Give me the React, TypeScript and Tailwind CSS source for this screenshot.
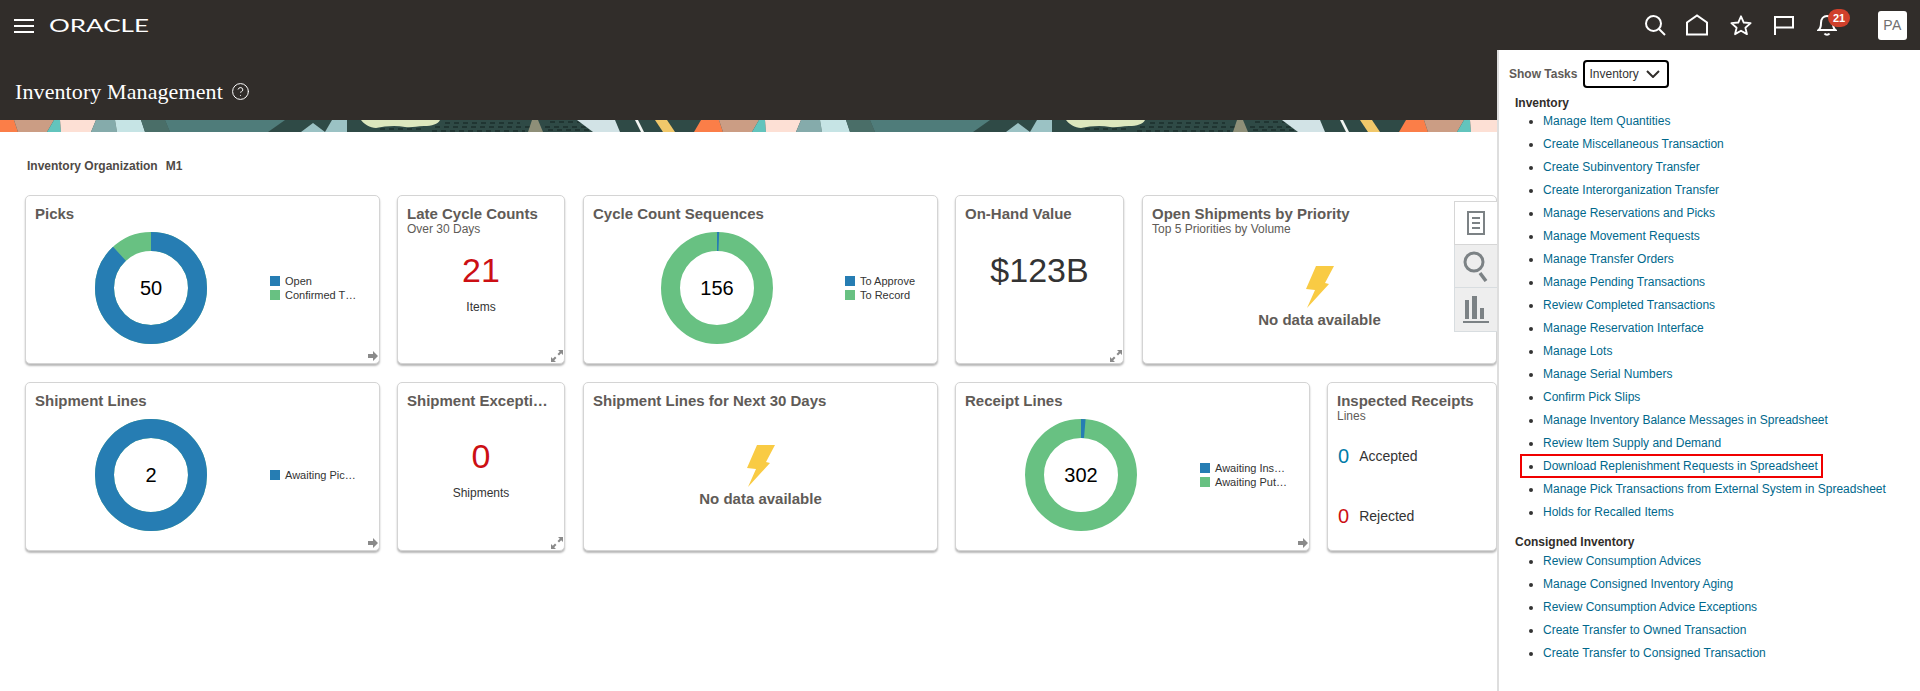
import { ReactNode } from 'react'
import { CircleHelp } from 'lucide-react'

const BLUE = '#267DB3'
const GREEN = '#68C182'

const inventoryTasks = [
  'Manage Item Quantities',
  'Create Miscellaneous Transaction',
  'Create Subinventory Transfer',
  'Create Interorganization Transfer',
  'Manage Reservations and Picks',
  'Manage Movement Requests',
  'Manage Transfer Orders',
  'Manage Pending Transactions',
  'Review Completed Transactions',
  'Manage Reservation Interface',
  'Manage Lots',
  'Manage Serial Numbers',
  'Confirm Pick Slips',
  'Manage Inventory Balance Messages in Spreadsheet',
  'Review Item Supply and Demand',
  'Download Replenishment Requests in Spreadsheet',
  'Manage Pick Transactions from External System in Spreadsheet',
  'Holds for Recalled Items',
]

const consignedTasks = [
  'Review Consumption Advices',
  'Manage Consigned Inventory Aging',
  'Review Consumption Advice Exceptions',
  'Create Transfer to Owned Transaction',
  'Create Transfer to Consigned Transaction',
]

function Banner() {
  return (
    <svg className="block w-full h-[12px]" height="12">
      <defs>
        <pattern id="banner-tile" width="705" height="12" patternUnits="userSpaceOnUse">
          <rect width="705" height="12" fill="#2F4A46" />
          <polygon points="0,0 14,0 18,12 0,12" fill="#FB7E48" />
          <polygon points="14,0 54,0 47,12 18,12" fill="#CB9D84" />
          <polygon points="54,0 60,0 61,12 47,12" fill="#62C4BD" />
          <polygon points="60,0 96,0 91,12 61,12" fill="#FDE0D5" />
          <polygon points="96,0 115,0 117,12 91,12" fill="#85ABAB" />
          <polygon points="115,0 141,0 145,12 117,12" fill="#C6E4E5" />
          <polygon points="141,0 165,0 170,12 145,12" fill="#4A6E68" />
          <polygon points="165,0 285,0 268,12 170,12" fill="#4F7C7A" />
          <polygon points="301,12 313,3 325,12" fill="#9BC2C4" />
          <polygon points="332,0 347,0 347,12 325,12" fill="#9BC2C4" />
          <path d="M361 0 H440 C438 4 432 6 424 6 C416 6 412 8 405 7 C396 5 385 6 376 8 C370 8 364 4 361 0 Z" fill="#DDE7BE" />
          <path
            d="M445 3 H520 M550 2 H590 M380 9 H425 M435 7 H530 M545 7 H600 M432 11 H525 M548 10 H590"
            stroke="#101F1E"
            strokeWidth="1"
            strokeDasharray="5 4"
          />
          <polygon points="532,0 538,0 543,12 528,12" fill="#8E8F78" />
          <polygon points="577,0 615,0 620,12 593,12" fill="#D2E3E6" />
          <polygon points="635,0 638,0 644,12 641,12" fill="#F2F5F2" />
          <polygon points="655,0 667,0 675,12 663,12" fill="#F1C86A" />
          <polygon points="701,0 705,0 705,12 694,12" fill="#FB7E48" />
        </pattern>
      </defs>
      <rect width="100%" height="12" fill="url(#banner-tile)" />
    </svg>
  )
}

function TopIcons() {
  return (
    <div className="flex items-center text-white">
      <svg width="22" height="22" viewBox="0 0 22 22" fill="none" stroke="currentColor" strokeWidth="2" className="mr-[19px]">
        <circle cx="9.5" cy="9.5" r="7.5" />
        <path d="M15 15 L21 21" />
      </svg>
      <svg width="24" height="22" viewBox="0 0 24 22" fill="none" stroke="currentColor" strokeWidth="2" className="mr-[20px]">
        <path d="M2 20.5 V8.5 L12 1.5 L22 8.5 V20.5 Z" />
      </svg>
      <svg width="24" height="22" viewBox="0 0 24 24" fill="none" stroke="currentColor" strokeWidth="2" strokeLinejoin="round" className="mr-[20px]">
        <path d="M12 2.5 L15 9.3 L22.5 10 L16.8 15 L18.5 22 L12 18.3 L5.5 22 L7.2 15 L1.5 10 L9 9.3 Z" />
      </svg>
      <svg width="22" height="20" viewBox="0 0 22 20" fill="none" stroke="currentColor" strokeWidth="2" className="mr-[22px]">
        <path d="M2 20 V2 H20 V12.5 H2" />
      </svg>
      <div className="relative w-[20px] h-[22px] mr-[41px]">
        <svg width="20" height="22" viewBox="0 0 20 22" fill="none" stroke="currentColor" strokeWidth="2">
          <path d="M1.5 16 C3.5 14.5 4 12 4 9 C4 5 6.5 2 10 2 C13.5 2 16 5 16 9 C16 12 16.5 14.5 18.5 16 Z" />
          <path d="M7.5 19.5 C8.5 21 11.5 21 12.5 19.5" />
        </svg>
        <span className="absolute left-[11px] top-[-5px] w-[22px] h-[18px] rounded-full bg-[#D0402B] text-white text-[11px] font-bold leading-[18px] text-center">
          21
        </span>
      </div>
      <div className="w-[29px] h-[29px] rounded-[3px] bg-white text-[#6f6f6f] text-[14px] leading-[29px] text-center tracking-[0.5px] mr-[13px]">
        PA
      </div>
    </div>
  )
}

function Header() {
  return (
    <header className="bg-[#312D2A] h-[120px] text-white">
      <div className="h-[50px] flex items-center justify-between">
        <div className="flex items-center">
          <div className="ml-[14px] mt-[1px] w-[20px] flex flex-col gap-[4px]">
            <div className="h-[2px] bg-white" />
            <div className="h-[2px] bg-white" />
            <div className="h-[2px] bg-white" />
          </div>
          <svg width="100" height="20" viewBox="0 0 100 20" className="ml-[15px] mt-[1px] overflow-visible">
            <text x="0" y="16" fontSize="18" fontWeight="400" fill="#fff" textLength="100" lengthAdjust="spacingAndGlyphs" className="font-['Lato']">
              ORACLE
            </text>
          </svg>
        </div>
        <TopIcons />
      </div>
      <div className="h-[70px] pt-[13px] pl-[15px] flex items-center gap-[8px]">
        <h1 className="font-['Liberation_Serif'] text-[22px] font-normal tracking-[0.1px]">Inventory Management</h1>
        <CircleHelp size={19} strokeWidth={1.25} />
      </div>
    </header>
  )
}

function Donut({ blue, total, value }: { blue: number; total: number; value: string }) {
  const r = 46.5
  const c = 2 * Math.PI * r
  const blueLen = (blue / total) * c
  return (
    <div className="relative w-[112px] h-[112px] shrink-0">
      <svg width="112" height="112" viewBox="0 0 112 112">
        <circle cx="56" cy="56" r={r} fill="none" stroke={GREEN} strokeWidth="19" />
        <circle
          cx="56"
          cy="56"
          r={r}
          fill="none"
          stroke={BLUE}
          strokeWidth="19"
          strokeDasharray={`${blueLen} ${c - blueLen}`}
          transform="rotate(-90 56 56)"
        />
      </svg>
      <div className="absolute inset-0 flex items-center justify-center text-[20px] text-black">{value}</div>
    </div>
  )
}

function Legend({ items }: { items: { color: string; label: string }[] }) {
  return (
    <div className="flex flex-col gap-[4px]">
      {items.map((i) => (
        <div key={i.label} className="flex items-center gap-[5px] h-[10px] text-[11px] text-[#333] whitespace-nowrap">
          <span className="w-[10px] h-[10px] shrink-0" style={{ backgroundColor: i.color }} />
          {i.label}
        </div>
      ))}
    </div>
  )
}

function ArrowCorner() {
  return (
    <svg width="10" height="10" viewBox="0 0 10 10" className="absolute right-[1px] bottom-[2px]" fill="#8a8a8a">
      <path d="M0 3 H5 V0 L10 5 L5 10 V7 H0 Z" />
    </svg>
  )
}

function ExpandCorner() {
  return (
    <svg width="12" height="12" viewBox="0 0 12 12" className="absolute right-[1px] bottom-[1px]" fill="#8a8a8a">
      <path d="M7 0 H12 V5 L10.2 3.2 L8 5.5 L6.5 4 L8.8 1.8 Z" />
      <path d="M0 12 V7 L1.8 8.8 L4 6.5 L5.5 8 L3.2 10.2 L5 12 Z" />
    </svg>
  )
}

function Card({
  title,
  sub,
  className,
  corner,
  children,
}: {
  title: string
  sub?: string
  className: string
  corner?: 'arrow' | 'expand'
  children: ReactNode
}) {
  return (
    <section
      className={`relative h-[169px] shrink-0 bg-white rounded-[5px] border border-[#d4d4d4] shadow-[0_2px_2px_rgba(0,0,0,0.28)] ${className}`}
    >
      <div className="h-[36px] pt-[9px] px-[9px]">
        <h2 className="text-[15px] font-bold leading-[18px] text-[#605B57] whitespace-nowrap">{title}</h2>
        {sub && <p className="text-[12px] leading-[12px] text-[#605B57] whitespace-nowrap">{sub}</p>}
      </div>
      {children}
      {corner === 'arrow' && <ArrowCorner />}
      {corner === 'expand' && <ExpandCorner />}
    </section>
  )
}

function Kpi({ value, label, color, className }: { value: string; label?: string; color: string; className: string }) {
  return (
    <div className={`flex flex-col items-center ${className}`}>
      <div className={`text-[34px] leading-[40px] ${color}`}>{value}</div>
      {label && <div className="mt-[9px] text-[12px] leading-[16px] text-[#333]">{label}</div>}
    </div>
  )
}

function Bolt() {
  return (
    <svg width="28" height="42" viewBox="0 0 28 42" fill="#F9CB44">
      <polygon points="10,0 28,0 19,17 23,18 1,42 9,24 0,23" />
    </svg>
  )
}

function NoData({ className }: { className: string }) {
  return (
    <div className={`flex flex-col items-center ${className}`}>
      <Bolt />
      <div className="mt-[3px] text-[15px] font-bold leading-[18px] text-[#605B57]">No data available</div>
    </div>
  )
}

function SideTabs() {
  return (
    <div className="absolute left-[1454px] top-[201px] w-[43px] h-[131px] flex flex-col z-10">
      <div className="h-[44px] bg-white border border-r-0 border-[#d6d6d6] flex items-center justify-center">
        <svg width="18" height="24" viewBox="0 0 18 24" fill="none" stroke="#7C8285" strokeWidth="2">
          <rect x="1" y="1" width="16" height="22" />
          <path d="M5 7 H13 M5 12 H13 M5 17 H13" />
        </svg>
      </div>
      <div className="h-[43px] bg-[#EEEEEE] border-b border-l border-[#d8dde0] flex items-center justify-center">
        <svg width="26" height="32" viewBox="0 0 26 32" fill="none" stroke="#7C8285">
          <circle cx="11" cy="12" r="9" strokeWidth="3" />
          <path d="M17 23 L23 31" strokeWidth="3.5" />
        </svg>
      </div>
      <div className="h-[44px] bg-[#EEEEEE] border-b border-l border-[#d8dde0] flex items-center justify-center">
        <svg width="26" height="27" viewBox="0 0 26 27" fill="#7C8285">
          <rect x="2" y="4" width="4" height="19" />
          <rect x="9" y="0" width="5" height="23" />
          <rect x="17" y="12" width="4" height="11" />
          <rect x="0" y="25" width="26" height="2" />
        </svg>
      </div>
    </div>
  )
}

function TaskList({ tasks }: { tasks: string[] }) {
  return (
    <ul className="list-disc pl-[28px] marker:text-[#333]">
      {tasks.map((t) => (
        <li key={t} className="relative h-[23px] leading-[23px] text-[12px] text-[#00688C] whitespace-nowrap">
          {t}
          {t.startsWith('Download') && (
            <span className="absolute left-[-23px] top-[-1px] w-[303px] h-[24px] border-2 border-[#F00000]" />
          )}
        </li>
      ))}
    </ul>
  )
}

function TasksPanel() {
  return (
    <aside className="absolute left-[1497px] right-0 top-[50px] bottom-0 bg-white border-l-2 border-[#DEDEDE] z-20">
      <div className="pl-[10px] pt-[10px] flex items-center h-[38px]">
        <span className="text-[12px] font-bold text-[#605B57]">Show Tasks</span>
        <div className="ml-[6px] w-[86px] h-[28px] box-border border-2 border-black rounded-[4px] flex items-center justify-between pl-[4px] pr-[7px] text-[12px] text-[#333]">
          Inventory
          <svg width="14" height="8" viewBox="0 0 14 8" fill="none" stroke="#312D2A" strokeWidth="2">
            <path d="M1 1 L7 7 L13 1" />
          </svg>
        </div>
      </div>
      <div className="pl-[16px] mt-[8px]">
        <h3 className="text-[12px] font-bold leading-[14px] text-[#312D2A]">Inventory</h3>
        <TaskList tasks={inventoryTasks} />
        <h3 className="mt-[11px] text-[12px] font-bold leading-[15px] text-[#312D2A]">Consigned Inventory</h3>
        <TaskList tasks={consignedTasks} />
      </div>
    </aside>
  )
}

export default function App() {
  return (
    <div className="relative h-[691px] w-[1920px] overflow-hidden bg-white font-['Liberation_Sans',Arial,sans-serif]">
      <Header />
      <Banner />
      <main className="pl-[25px] pt-[26px]">
        <div className="flex h-[16px] items-center gap-[8px] pl-[2px] text-[12px] leading-[16px] text-[#4F4A46] font-bold">
          <span>Inventory Organization</span>
          <span>M1</span>
        </div>
        <div className="mt-[21px] flex gap-[17px]">
          <Card title="Picks" className="w-[355px]" corner="arrow">
            <div className="flex items-center pl-[69px] gap-[63px]">
              <Donut blue={44} total={50} value="50" />
              <Legend items={[{ color: BLUE, label: 'Open' }, { color: GREEN, label: 'Confirmed T…' }]} />
            </div>
          </Card>
          <Card title="Late Cycle Counts" sub="Over 30 Days" className="w-[168px]" corner="expand">
            <Kpi value="21" label="Items" color="text-[#CC0F14]" className="mt-[18px]" />
          </Card>
          <Card title="Cycle Count Sequences" className="w-[355px] ml-[1px]">
            <div className="flex items-center pl-[77px] gap-[72px]">
              <Donut blue={1} total={156} value="156" />
              <Legend items={[{ color: BLUE, label: 'To Approve' }, { color: GREEN, label: 'To Record' }]} />
            </div>
          </Card>
          <Card title="On-Hand Value" className="w-[169px]" corner="expand">
            <Kpi value="$123B" color="text-[#333]" className="mt-[18px]" />
          </Card>
          <Card title="Open Shipments by Priority" sub="Top 5 Priorities by Volume" className="w-[355px] ml-[1px]">
            <NoData className="mt-[34px]" />
          </Card>
        </div>
        <div className="mt-[18px] flex gap-[17px]">
          <Card title="Shipment Lines" className="w-[355px]" corner="arrow">
            <div className="flex items-center pl-[69px] gap-[63px]">
              <Donut blue={2} total={2} value="2" />
              <Legend items={[{ color: BLUE, label: 'Awaiting Pic…' }]} />
            </div>
          </Card>
          <Card title="Shipment Excepti…" className="w-[168px]" corner="expand">
            <Kpi value="0" label="Shipments" color="text-[#CC0F14]" className="mt-[17px]" />
          </Card>
          <Card title="Shipment Lines for Next 30 Days" className="w-[355px] ml-[1px]">
            <NoData className="mt-[26px]" />
          </Card>
          <Card title="Receipt Lines" className="w-[355px]" corner="arrow">
            <div className="flex items-center pl-[69px] gap-[63px]">
              <Donut blue={4} total={302} value="302" />
              <Legend items={[{ color: BLUE, label: 'Awaiting Ins…' }, { color: GREEN, label: 'Awaiting Put…' }]} />
            </div>
          </Card>
          <Card title="Inspected Receipts" sub="Lines" className="w-[170px]">
            <div className="mt-[7px] pl-[10px]">
              <div className="h-[60px] flex items-center gap-[10px] text-[14px] text-[#333]">
                <span className="text-[20px] text-[#007BA8]">0</span>
                Accepted
              </div>
              <div className="h-[60px] flex items-center gap-[10px] text-[14px] text-[#333]">
                <span className="text-[20px] text-[#CC0F14]">0</span>
                Rejected
              </div>
            </div>
          </Card>
        </div>
      </main>
      <SideTabs />
      <TasksPanel />
    </div>
  )
}
